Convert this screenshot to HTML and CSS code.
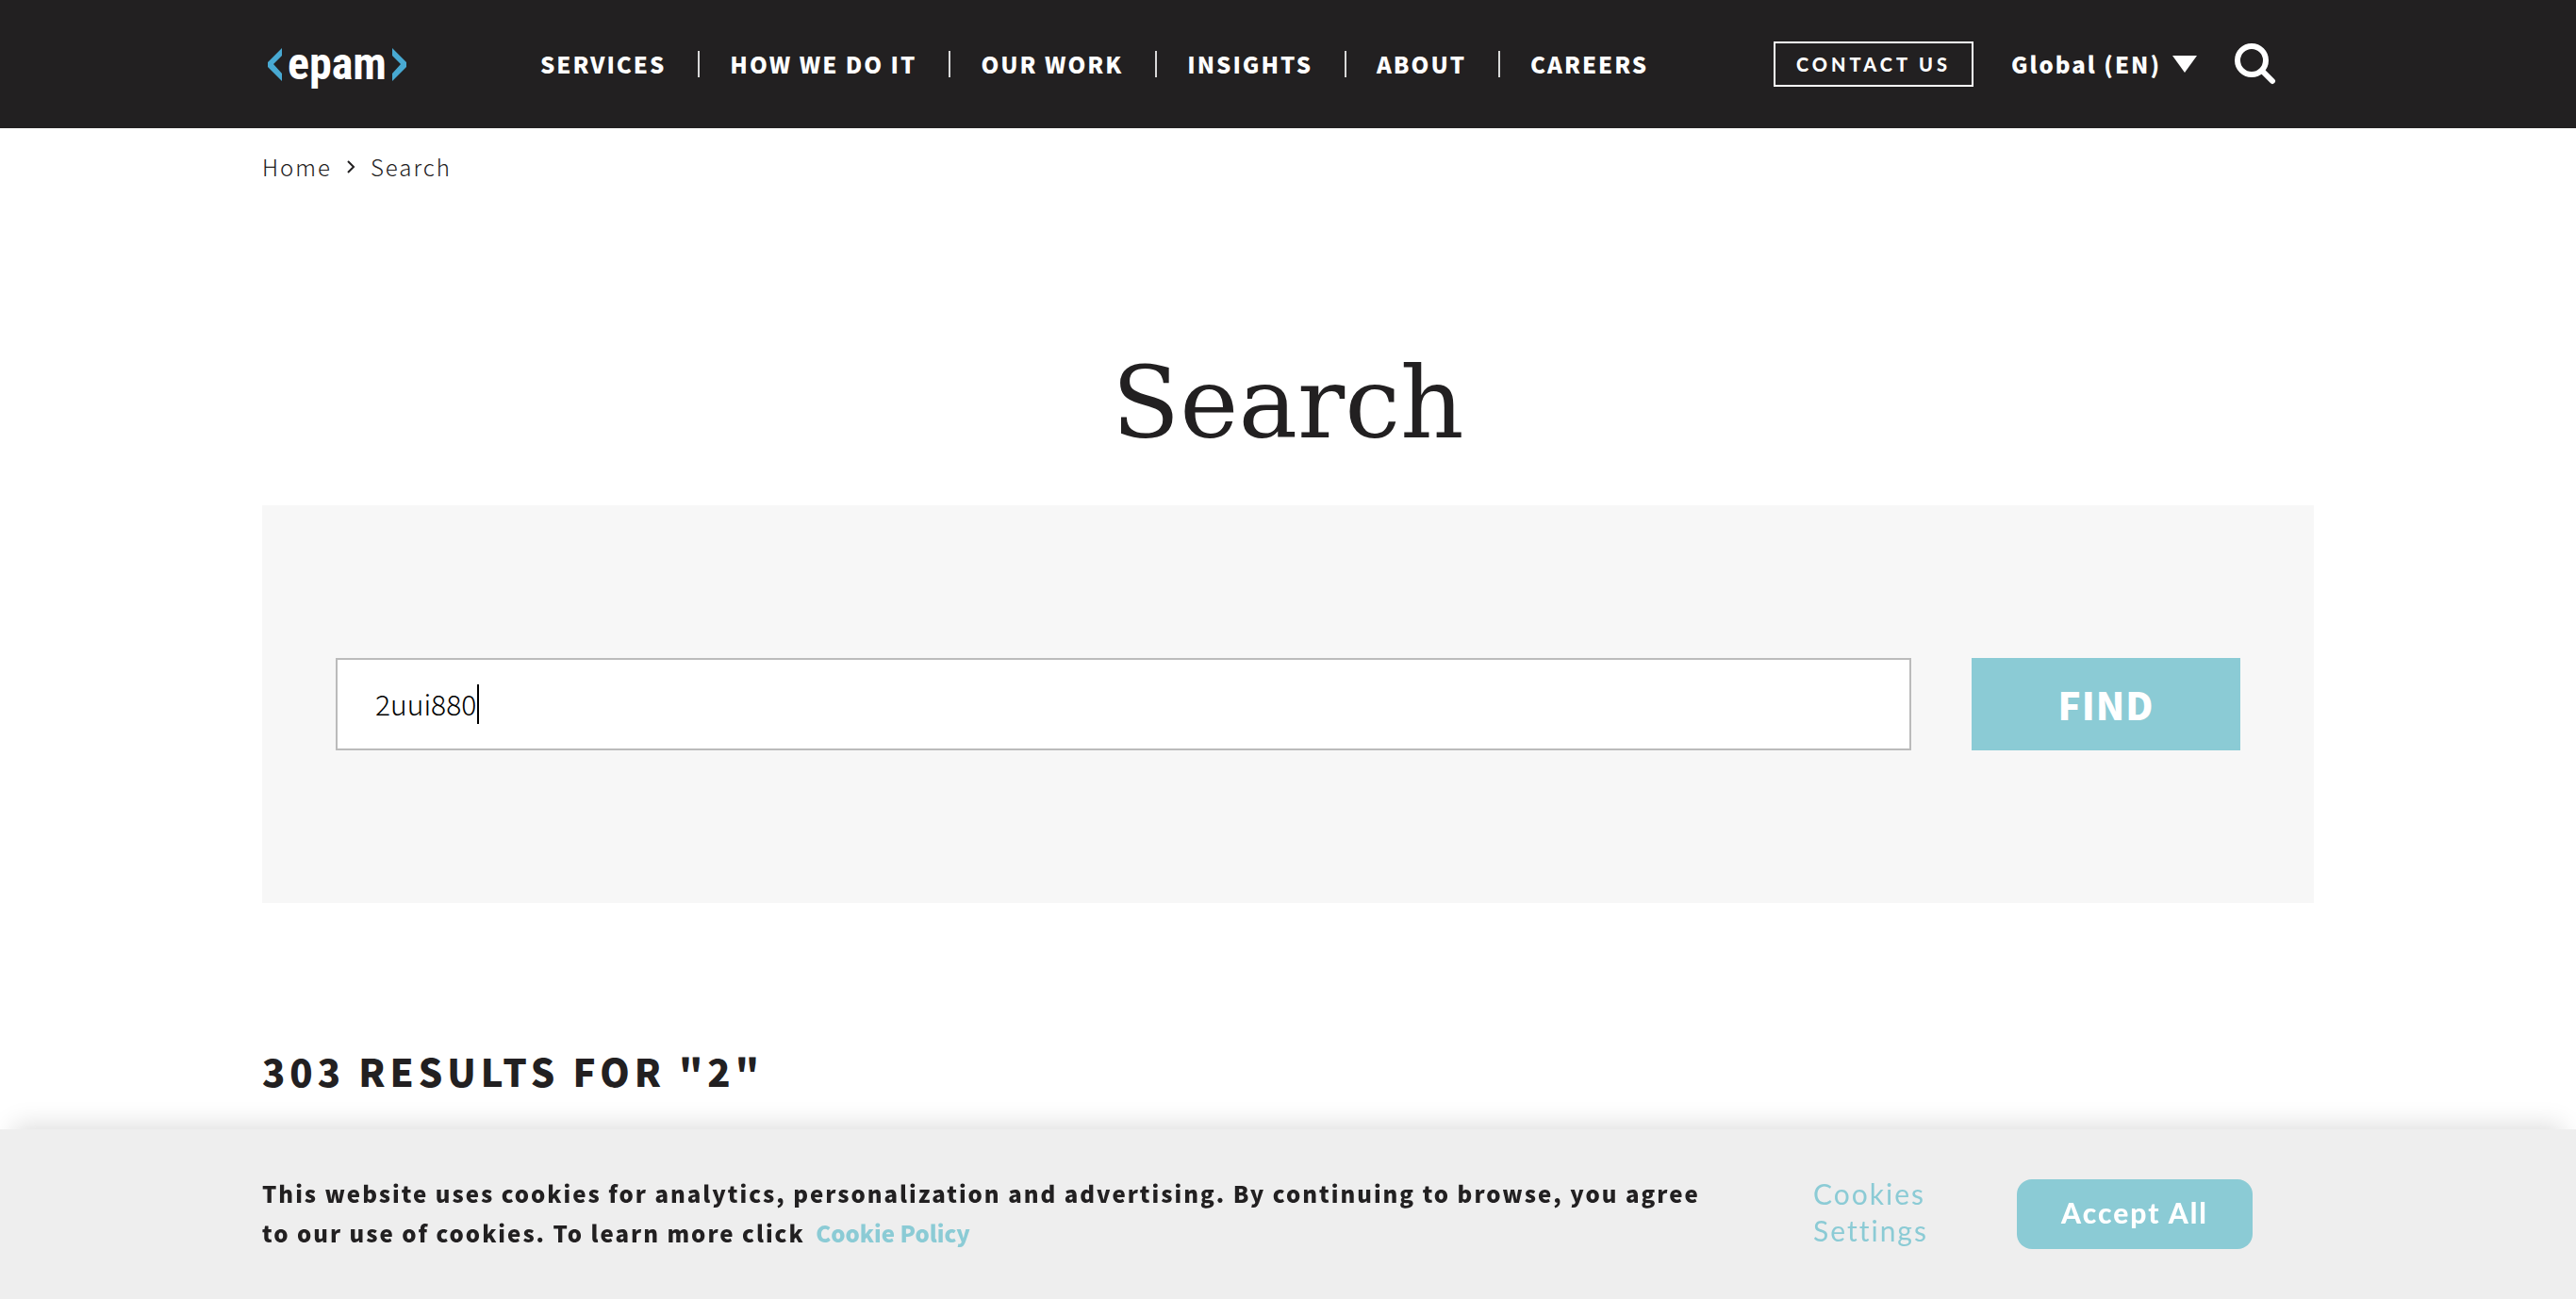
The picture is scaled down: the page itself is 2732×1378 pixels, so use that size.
FILE: index.html
```
<!DOCTYPE html>
<html lang="en">
<head>
<meta charset="utf-8">
<title>Search | EPAM</title>
<meta name="viewport" content="width=device-width, initial-scale=1">
<link rel="stylesheet" href="styles.css">
</head>
<body>
<header class="header">
  <div class="container header-row">
    <a class="logo" href="#" aria-label="EPAM home">
      <svg class="logo-bracket" viewBox="0 0 15 35" aria-hidden="true"><path d="M15 0v8L6 17l9 10v8L0 20v-5z"/></svg>
      <span class="logo-name">epam</span>
      <svg class="logo-bracket" viewBox="0 0 15 35" aria-hidden="true"><path d="M0 0v8l9 9-9 10v8l15-15v-5z"/></svg>
    </a>
    <nav class="nav" aria-label="Main">
      <a href="#">SERVICES</a>
      <a href="#">HOW WE DO IT</a>
      <a href="#">OUR WORK</a>
      <a href="#">INSIGHTS</a>
      <a href="#">ABOUT</a>
      <a href="#">CAREERS</a>
    </nav>
    <div class="tools">
      <a class="contact" href="#">CONTACT US</a>
      <label class="region">
        <select class="region-select" aria-label="Region and language"><option>Global (EN)</option></select>
        <svg class="region-arrow" viewBox="0 0 26 18" aria-hidden="true"><path d="M0 0h26L13 18z"/></svg>
      </label>
      <button class="search-toggle" type="button" aria-label="Search">
        <svg viewBox="0 0 44 44" aria-hidden="true"><circle cx="18" cy="18" r="15"/><path d="M29 29l11 11"/></svg>
      </button>
    </div>
  </div>
</header>

<main class="container">
  <nav class="breadcrumbs" aria-label="Breadcrumb">
    <a href="#">Home</a>
    <svg viewBox="0 0 9 14" aria-hidden="true"><path d="M1 1l6 6-6 6"/></svg>
    <a href="#">Search</a>
  </nav>
  <h1 class="title">Search</h1>
  <form class="search-panel">
    <div class="search-field">
      <input class="search-input" type="text" value="2uui880" aria-label="Search query">
      <span class="caret"></span>
    </div>
    <button class="find" type="submit">FIND</button>
  </form>
  <h2 class="results">303 RESULTS FOR "2"</h2>
</main>

<section class="cookies" aria-label="Cookie notice">
  <div class="container cookies-row">
    <p class="cookies-text">This website uses cookies for analytics, personalization and advertising. By continuing to browse, you agree to our use of cookies. To learn more click <a class="policy" href="#">Cookie Policy</a></p>
    <button class="settings" type="button">Cookies Settings</button>
    <button class="accept" type="button">Accept All</button>
  </div>
</section>
</body>
</html>
```

FILE: styles.css
```
* { box-sizing: border-box; }

body {
  margin: 0;
  background: #fff;
  color: #222021;
  font-family: "Noto Sans CJK SC", "Noto Sans", sans-serif;
}

a { color: inherit; text-decoration: none; }
button, input, select { font: inherit; letter-spacing: inherit; }

.container { max-width: 2176px; margin: 0 auto; }

/* Header */
.header { background: #222021; color: #fff; }
.header-row { display: flex; align-items: center; height: 136px; }

.logo { display: flex; align-items: center; gap: 6px; width: 295px; padding-left: 6px; }
.logo-bracket { width: 15px; height: 35px; fill: #48a9d2; }
.logo-name { font: 700 48px/60px "Roboto Condensed", Roboto, sans-serif; }

.nav { display: flex; font-size: 24px; line-height: 28px; font-weight: 900; letter-spacing: 2px; }
.nav a { padding-right: 34px; }
.nav a + a { padding-left: 32px; border-left: 2px solid #d8d8d8; }

.tools { display: flex; align-items: center; margin-left: auto; padding-right: 40px; }
.contact {
  width: 212px;
  border: 2px solid #fff;
  font: 900 20px/44px Lato, sans-serif;
  letter-spacing: 4px;
  text-align: center;
}
.region { display: flex; align-items: center; gap: 12px; margin-left: 40px; }
.region-select {
  appearance: none;
  padding: 0;
  border: 0;
  background: none;
  color: #fff;
  font-size: 24px;
  line-height: 36px;
  font-weight: 900;
  letter-spacing: 2px;
}
.region-arrow { width: 26px; height: 18px; fill: #fff; pointer-events: none; }
.search-toggle { width: 44px; height: 44px; margin-left: 40px; padding: 0; border: 0; background: none; }
.search-toggle svg { display: block; fill: none; stroke: #fff; stroke-width: 6; stroke-linecap: round; }

/* Page */
.breadcrumbs {
  display: flex;
  align-items: center;
  gap: 16px;
  padding: 23px 0 1px;
  font-size: 24px;
  line-height: 36px;
  font-weight: 300;
  letter-spacing: 2px;
}
.breadcrumbs svg { width: 9px; height: 14px; fill: none; stroke: #222021; stroke-width: 2; }

.title {
  margin: 172px 0 48px;
  font: 400 105px/120px "DejaVu Serif", serif;
  text-align: center;
}

.search-panel { display: flex; gap: 64px; padding: 162px 78px; background: #f7f7f7; }
.search-field { position: relative; flex: 1; }
.search-input {
  display: block;
  width: 100%;
  height: 98px;
  padding: 0 40px 2px;
  border: 2px solid #bbb;
  border-radius: 0;
  outline: 0;
  background: #fff;
  color: #000;
  font-size: 30px;
  font-weight: 300;
}
.caret { position: absolute; left: 150px; top: 28px; width: 2px; height: 42px; background: #000; }
.find {
  width: 285px;
  height: 98px;
  padding: 0;
  border: 0;
  background: #8bcbd5;
  color: #fff;
  font-size: 40px;
  font-weight: 900;
  letter-spacing: 1px;
}

.results { margin: 148px 0 0; font-size: 40px; line-height: 60px; font-weight: 900; letter-spacing: 5px; }

/* Cookie notice */
.cookies {
  position: fixed;
  right: 0;
  bottom: 0;
  left: 0;
  padding: 47px 0;
  background: #eee;
  box-shadow: 0 -18px 26px -14px rgba(0, 0, 0, .14);
}
.cookies-row { display: flex; align-items: center; }
.cookies-text { width: 1530px; margin: 0; padding-bottom: 2px; font-size: 24px; line-height: 42px; font-weight: 900; letter-spacing: 2px; }
.policy { margin-left: 4px; color: #8bcbd5; letter-spacing: 0; }
.settings {
  width: 124px;
  margin-left: 115px;
  padding: 0 0 4px;
  border: 0;
  background: none;
  color: #8bcbd5;
  font: 400 30px/39px Lato, sans-serif;
  letter-spacing: 2px;
  text-align: left;
}
.accept {
  width: 250px;
  height: 74px;
  margin-left: 92px;
  padding: 0 0 4px;
  border: 0;
  border-radius: 16px;
  background: #8bcbd5;
  color: #fff;
  font: 900 30px/39px Lato, sans-serif;
  letter-spacing: 2px;
}
```
